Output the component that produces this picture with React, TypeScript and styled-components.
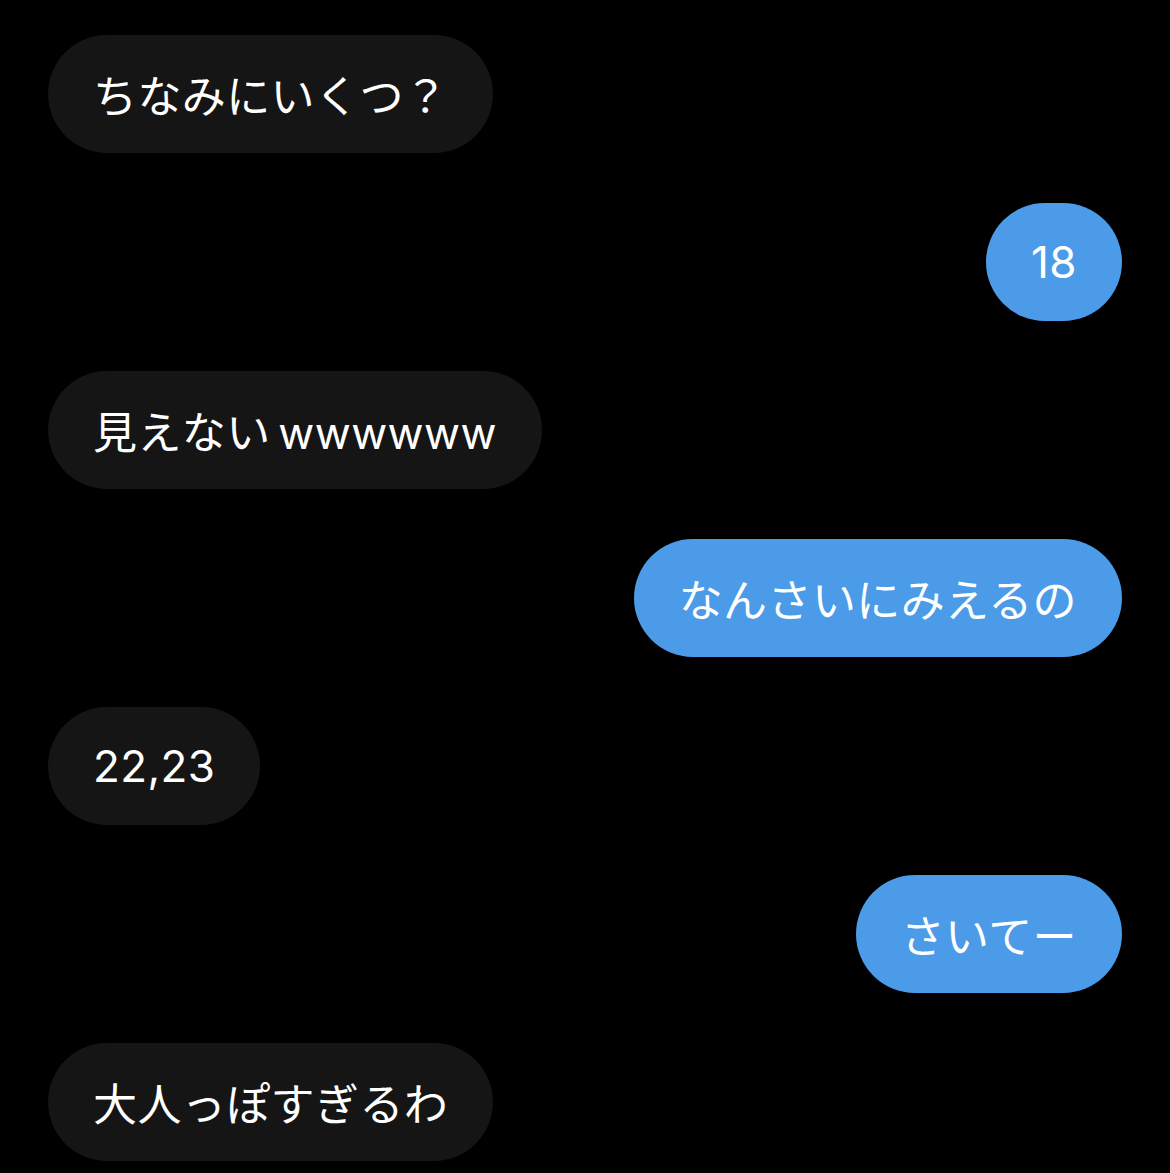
import styled, { createGlobalStyle } from "styled-components";

const GlobalStyle = createGlobalStyle`
  html, body {
    margin: 0;
    padding: 0;
    background: #000;
  }
  body {
    font-family: "Inter", "Noto Sans CJK JP", sans-serif;
  }
`;

const Thread = styled.div`
  display: flex;
  flex-direction: column;
  gap: 50px;
  padding: 35px 48px 12px;
  min-height: 1173px;
  box-sizing: border-box;
  background: #000;
`;

const Row = styled.div<{ $mine: boolean }>`
  display: flex;
  justify-content: ${(p) => (p.$mine ? "flex-end" : "flex-start")};
`;

const Bubble = styled.div<{ $mine: boolean }>`
  display: flex;
  align-items: center;
  height: 118px;
  padding: 0 45px;
  border-radius: 59px;
  background: ${(p) => (p.$mine ? "#4c9be8" : "#151515")};
  color: #fff;
  font-size: 44px;
  letter-spacing: 0.4px;
  word-spacing: -5px;
  white-space: nowrap;
  box-sizing: border-box;
`;

type Message = { text: string; mine: boolean };

const messages: Message[] = [
  { text: "ちなみにいくつ？", mine: false },
  { text: "18", mine: true },
  { text: "見えない wwwwww", mine: false },
  { text: "なんさいにみえるの", mine: true },
  { text: "22,23", mine: false },
  { text: "さいてー", mine: true },
  { text: "大人っぽすぎるわ", mine: false },
];

function App() {
  return (
    <>
      <GlobalStyle />
      <Thread>
        {messages.map((m, i) => (
          <Row key={i} $mine={m.mine}>
            <Bubble $mine={m.mine}>{m.text}</Bubble>
          </Row>
        ))}
      </Thread>
    </>
  );
}

export default App;
